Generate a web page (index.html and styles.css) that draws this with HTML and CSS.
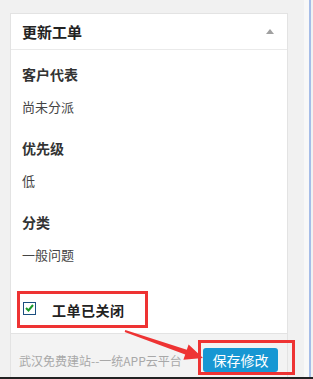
FILE: index.html
```html
<!DOCTYPE html>
<html lang="zh-CN">
<head>
    <meta charset="UTF-8">
    <meta name="viewport" content="width=device-width, initial-scale=1.0">
    <title>更新工单</title>
    <link rel="stylesheet" href="styles.css">
</head>
<body>
    <div class="screen">
        <div class="page">
            <div class="card">
                <div class="card-head">
                    <h2>更新工单</h2>
                    <span class="toggle"></span>
                </div>
                <div class="card-body">
                    <div class="label">客户代表</div>
                    <div class="value">尚未分派</div>

                    <div class="label">优先级</div>
                    <div class="value">低</div>

                    <div class="label">分类</div>
                    <div class="value">一般问题</div>

                    <label class="check-row">
                        <span class="checkbox">
                            <svg width="9" height="8" viewBox="0 0 9 8"><path d="M1 4 L3.5 6.5 L8 1" fill="none" stroke="#1a9a2a" stroke-width="2"/></svg>
                        </span>
                        <span class="check-text">工单已关闭</span>
                    </label>
                </div>
                <div class="card-foot">
                    <span class="foot-text">武汉免费建站--一统APP云平台</span>
                    <span class="mark">
                        <button class="save">保存修改</button>
                    </span>
                </div>
            </div>
        </div>
        <div class="edge"></div>
    </div>
    <div class="bottom-bar"></div>

    <!-- annotation arrow -->
    <svg class="arrow" width="313" height="379" viewBox="0 0 313 379">
        <polygon points="124.7,332 125.3,330 186.8,349.7 188.6,344.5 203,358 183.4,359.7 185.2,354.5" fill="#ee3333"/>
    </svg>
</body>
</html>
```

FILE: styles.css
```css
* {
    margin: 0;
    padding: 0;
    box-sizing: border-box;
}

body {
    font-family: "Noto Sans CJK SC", "Liberation Sans", sans-serif;
    background: #f1f1f1;
    width: 313px;
    height: 379px;
    overflow: hidden;
    position: relative;
    color: #333;
}

.screen {
    display: flex;
    height: 377px;
}

.page {
    flex: 1;
    padding: 13px 0 0 10px;
}

.edge {
    width: 7px;
    margin-right: 2px;
    background: #f8f8f8;
    border-right: 2px solid #a6bde8;
}

.bottom-bar {
    height: 2px;
    background: #222;
}

/* Card */
.card {
    width: 278px;
    height: 364px;
    background: #fff;
    border: 1px solid #e3e3e3;
    border-bottom: none;
    display: flex;
    flex-direction: column;
}

.card-head {
    height: 36px;
    border-bottom: 1px solid #eaeaea;
    display: flex;
    align-items: center;
    justify-content: space-between;
    padding: 0 13px 0 11px;
}

.card-head h2 {
    font-size: 15px;
    font-weight: bold;
    color: #222;
    line-height: 20px;
}

.toggle {
    width: 0;
    height: 0;
    border-left: 4px solid transparent;
    border-right: 4px solid transparent;
    border-bottom: 5px solid #a0a0a0;
    margin-bottom: 1px;
}

.card-body {
    padding: 14px 0 0 11px;
    flex: 1;
}

.label {
    font-size: 14px;
    font-weight: bold;
    line-height: 20px;
    color: #333;
    margin-bottom: 13px;
}

.value {
    font-size: 13px;
    line-height: 20px;
    color: #444;
    margin-bottom: 21px;
}

/* Closed checkbox, marked with a red box */
.check-row {
    display: flex;
    align-items: center;
    width: 131px;
    height: 37px;
    margin: 26px 0 0 -5px;
    padding-left: 3px;
    border: 3px solid #ee3333;
}

.checkbox {
    width: 13px;
    height: 13px;
    border: 1px solid #1c4f80;
    background: #fff;
    display: flex;
    align-items: center;
    justify-content: center;
    margin-top: -3px;
}

.check-text {
    margin-left: 16px;
    font-size: 14px;
    font-weight: bold;
    color: #222;
    letter-spacing: 0.5px;
}

/* Footer */
.card-foot {
    height: 44px;
    background: #f3f3f3;
    border-top: 1px solid #e3e3e3;
    display: flex;
    align-items: center;
    justify-content: space-between;
    padding: 9px 9px 0 8px;
}

.foot-text {
    font-size: 12px;
    color: #a8a8a8;
}

.mark {
    position: relative;
    display: flex;
}

.mark::after {
    content: "";
    position: absolute;
    top: -8px;
    left: -5px;
    right: -17px;
    bottom: -3px;
    border: 3px solid #ee3333;
}

.save {
    width: 75px;
    height: 24px;
    border: none;
    border-radius: 3px;
    background: #1797d3;
    color: #fff;
    font-family: "Noto Sans CJK SC", sans-serif;
    font-size: 14px;
    line-height: 24px;
}

.arrow {
    position: absolute;
    left: 0;
    top: 0;
    pointer-events: none;
}
```
